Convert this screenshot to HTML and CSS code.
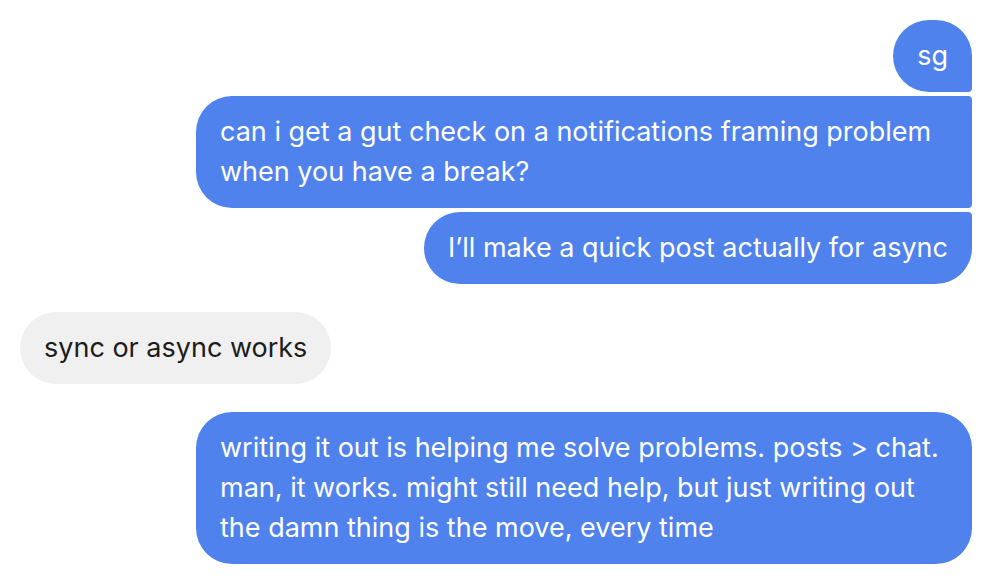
FILE: index.html
```html
<!DOCTYPE html>
<html lang="en">
<head>
    <meta charset="UTF-8">
    <meta name="viewport" content="width=device-width, initial-scale=1.0">
    <title>Chat</title>
    <link rel="stylesheet" href="styles.css">
</head>
<body>

<div class="thread">
    <!-- Outgoing group -->
    <div class="group mine">
        <div class="bubble first">sg</div>
        <div class="bubble middle">can i get a gut check on a notifications framing problem when you have a break?</div>
        <div class="bubble last">I’ll make a quick post actually for async</div>
    </div>

    <!-- Incoming -->
    <div class="group theirs">
        <div class="bubble">sync or async works</div>
    </div>

    <!-- Outgoing -->
    <div class="group mine">
        <div class="bubble">writing it out is helping me solve problems. posts &gt; chat. man, it works. might still need help, but just writing out the damn thing is the move, every time</div>
    </div>
</div>

</body>
</html>
```

FILE: styles.css
```css
body {
    font-family: Inter, "Noto Sans", sans-serif;
    background-color: #ffffff;
    margin: 0;
    padding: 20px 22px 20px 20px;
}

.thread {
    display: flex;
    flex-direction: column;
    gap: 28px;
}

.group {
    display: flex;
    flex-direction: column;
    gap: 4px;
}

.mine {
    align-items: flex-end;
}

.theirs {
    align-items: flex-start;
}

.bubble {
    max-width: 728px;
    padding: 16px 24px;
    font-size: 27px;
    line-height: 40px;
    border-radius: 36px;
}

.mine .bubble {
    background-color: #4f82ec;
    color: #ffffff;
}

.theirs .bubble {
    background-color: #f0f0f0;
    color: #1c1c1c;
}

.mine .first {
    border-bottom-right-radius: 4px;
}

.mine .middle {
    border-top-right-radius: 4px;
    border-bottom-right-radius: 4px;
}

.mine .last {
    border-top-right-radius: 4px;
}
```
